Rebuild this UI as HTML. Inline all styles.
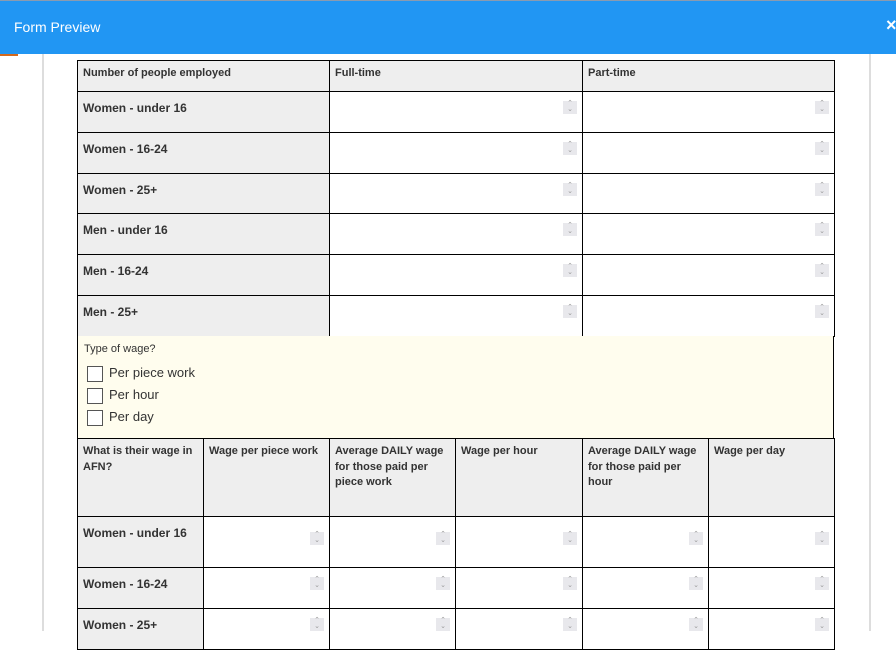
<!DOCTYPE html>
<html><head><meta charset="utf-8"><style>
*{box-sizing:border-box;margin:0;padding:0}
body{width:896px;height:631px;overflow:hidden;background:#fff;font-family:"Liberation Sans",sans-serif;color:#333;position:relative}
.hdr{position:absolute;left:0;top:0;width:896px;height:54px;background:#2196f3;border-top:1px solid #8a9bb0}
.hdr span{position:absolute;left:14px;top:18px;color:#fff;font-size:14px}
.hdr b{position:absolute;left:886px;top:14px;color:#fff;font-size:18px}
.or{position:absolute;left:0;top:54px;width:18px;height:2px;background:#d2691e}
.vl{position:absolute;top:54px;width:2px;height:577px;background:#ddd}
table{position:absolute;left:77px;border-collapse:collapse;table-layout:fixed}
td{border:1px solid #000;vertical-align:top;position:relative;font-size:11px;font-weight:bold;padding:5px 5px;line-height:15.5px}
td.g{background:#eee}
td.l{font-size:12px;padding-top:7px;line-height:18px}
.sp{position:absolute;right:5px;top:9px;width:14px;height:13px;background:#e8e8ec;color:#999;font-size:7px;line-height:6px;text-align:center;font-weight:normal}
.yel{position:absolute;left:77px;top:336px;width:757px;height:103px;background:#fffdee;border:1px solid #000;border-top:none;border-bottom:none;font-size:11px}
.yel .q{position:absolute;left:6px;top:7px}
.cb{position:absolute;left:9px;font-size:13px;padding-left:22px;height:16px;line-height:16px}
.cb:before{content:"";position:absolute;left:0;top:1px;width:14px;height:14px;border:1px solid #555;background:#fff}
</style></head><body>
<div class="hdr"><span>Form Preview</span><b>×</b></div>
<div class="or"></div>
<div class="vl" style="left:42px"></div>
<div class="vl" style="left:869px"></div>
<table style="top:60px;width:757px">
<colgroup><col style="width:252px"><col style="width:253px"><col style="width:252px"></colgroup>
<tr style="height:31px"><td class="g">Number of people employed</td><td class="g">Full-time</td><td class="g">Part-time</td></tr>
<tr style="height:41px"><td class="g l">Women - under 16</td><td><div class="sp">⌃<br>⌄</div></td><td><div class="sp">⌃<br>⌄</div></td></tr>
<tr style="height:41px"><td class="g l">Women - 16-24</td><td><div class="sp">⌃<br>⌄</div></td><td><div class="sp">⌃<br>⌄</div></td></tr>
<tr style="height:40px"><td class="g l">Women - 25+</td><td><div class="sp">⌃<br>⌄</div></td><td><div class="sp">⌃<br>⌄</div></td></tr>
<tr style="height:41px"><td class="g l">Men - under 16</td><td><div class="sp">⌃<br>⌄</div></td><td><div class="sp">⌃<br>⌄</div></td></tr>
<tr style="height:41px"><td class="g l">Men - 16-24</td><td><div class="sp">⌃<br>⌄</div></td><td><div class="sp">⌃<br>⌄</div></td></tr>
<tr style="height:41px"><td class="g l">Men - 25+</td><td><div class="sp">⌃<br>⌄</div></td><td><div class="sp">⌃<br>⌄</div></td></tr>
</table>
<div class="yel"><div class="q">Type of wage?</div>
<div class="cb" style="top:29px">Per piece work</div>
<div class="cb" style="top:51px">Per hour</div>
<div class="cb" style="top:73px">Per day</div></div>
<table style="top:438px;width:757px">
<colgroup><col style="width:126px"><col style="width:126px"><col style="width:126px"><col style="width:127px"><col style="width:126px"><col style="width:126px"></colgroup>
<tr style="height:78px"><td class="g">What is their wage in AFN?</td><td class="g">Wage per piece work</td><td class="g">Average DAILY wage for those paid per piece work</td><td class="g">Wage per hour</td><td class="g">Average DAILY wage for those paid per hour</td><td class="g">Wage per day</td></tr>
<tr style="height:51px"><td class="g l">Women - under 16</td><td><div class="sp" style="top:15px">⌃<br>⌄</div></td><td><div class="sp" style="top:15px">⌃<br>⌄</div></td><td><div class="sp" style="top:15px">⌃<br>⌄</div></td><td><div class="sp" style="top:15px">⌃<br>⌄</div></td><td><div class="sp" style="top:15px">⌃<br>⌄</div></td></tr>
<tr style="height:41px"><td class="g l">Women - 16-24</td><td><div class="sp">⌃<br>⌄</div></td><td><div class="sp">⌃<br>⌄</div></td><td><div class="sp">⌃<br>⌄</div></td><td><div class="sp">⌃<br>⌄</div></td><td><div class="sp">⌃<br>⌄</div></td></tr>
<tr style="height:41px"><td class="g l">Women - 25+</td><td><div class="sp">⌃<br>⌄</div></td><td><div class="sp">⌃<br>⌄</div></td><td><div class="sp">⌃<br>⌄</div></td><td><div class="sp">⌃<br>⌄</div></td><td><div class="sp">⌃<br>⌄</div></td></tr>
</table>
</body></html>
